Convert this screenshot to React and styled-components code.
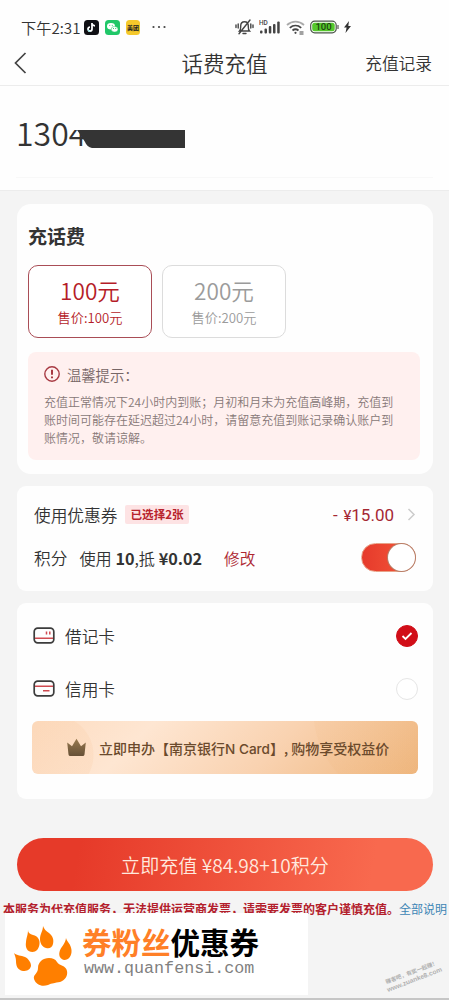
import React, { useState } from 'react';
import styled, { createGlobalStyle } from 'styled-components';

const GlobalStyle = createGlobalStyle`
  * {
    box-sizing: border-box;
  }
  body {
    margin: 0;
    background: #f4f4f4;
    font-family: "Noto Sans CJK SC", "Noto Sans", sans-serif;
    font-weight: 350;
    color: #333;
  }
  svg {
    display: block;
    flex-shrink: 0;
  }
`;

const Page = styled.div`
  display: flex;
  flex-direction: column;
  position: relative;
  width: 449px;
  height: 1000px;
  overflow: hidden;
  white-space: nowrap;
  background: #f4f4f4;
  border-bottom: 2px solid #c6c6c6;
`;

const StatusBar = styled.div`
  display: flex;
  align-items: center;
  height: 42px;
  padding: 12px 98px 0 21px;
  background: #fefefe;
`;

const Time = styled.span`
  width: 63px;
  font-size: 15.2px;
  line-height: 20px;
`;

const StatusIcons = styled.div`
  display: flex;
  align-items: center;
  gap: ${(p) => p.$gap}px;
  margin-left: ${(p) => (p.$end ? 'auto' : 0)};
`;

const NavBar = styled.div`
  display: grid;
  grid-template-columns: 1fr auto 1fr;
  align-items: center;
  height: 44px;
  padding: 0 17px 2px 14px;
  background: #fefefe;
  border-bottom: 1px solid #ececec;
`;

const Title = styled.div`
  padding-left: 3px;
  font-size: 21.5px;
  line-height: 41px;
`;

const NavLink = styled.div`
  justify-self: end;
  font-size: 16.7px;
`;

const PhoneSection = styled.div`
  display: flex;
  height: 105px;
  padding: 25px 16px 0;
  background: #fefefe;
  border-bottom: 1px solid #ececec;
`;

const PhoneField = styled.div`
  position: relative;
  flex: 1;
  height: 67px;
  border-bottom: 1px solid #f8f8f8;
  font-size: 32px;
  line-height: 43px;
`;

const Redaction = styled.svg`
  position: absolute;
  left: 53px;
  top: 8px;
`;

const Card = styled.section`
  display: flex;
  flex-direction: column;
  height: ${(p) => p.$height}px;
  margin: ${(p) => p.$top}px 16px 0 17px;
  padding: ${(p) => p.$pad};
  border-radius: ${(p) => p.$radius || 9}px;
  background: #fefefe;
`;

const CardTitle = styled.h2`
  margin: 0;
  font-size: 19px;
  line-height: 28px;
  font-weight: 700;
`;

const Options = styled.div`
  display: flex;
  gap: 10px;
  margin-top: 15px;
`;

const Option = styled.button`
  display: flex;
  flex-direction: column;
  align-items: center;
  width: 124px;
  height: 73px;
  padding: 10px 0 0;
  font-family: inherit;
  font-weight: inherit;
  color: ${(p) => (p.$active ? '#b51c28' : '#9b9b9b')};
  background: #fff;
  border: 1.5px solid ${(p) => (p.$active ? '#a94d56' : '#dcdcdc')};
  border-radius: 10px;
`;

const Amount = styled.span`
  font-size: 22.6px;
  line-height: 30px;
`;

const Price = styled.span`
  font-size: 13.2px;
  line-height: 24px;
`;

const Tips = styled.div`
  width: 392px;
  height: 108px;
  margin-top: 14px;
  padding: 11px 16px;
  border-radius: 8px;
  background: #fff0ef;
`;

const TipsTitle = styled.div`
  display: flex;
  align-items: center;
  gap: 7px;
  height: 22px;
  font-size: 14.3px;
  color: #766;
`;

const TipsText = styled.p`
  margin: 8px 0 0;
  font-size: 12px;
  line-height: 18px;
  color: #877877;
`;

const Row = styled.div`
  display: flex;
  align-items: center;
  height: ${(p) => p.$height}px;
  font-size: 16.7px;
`;

const Badge = styled.span`
  height: 19px;
  margin-left: 8px;
  padding: 0 5px;
  border-radius: 2px;
  background: #fde3e4;
  color: #b8232d;
  font-size: 11.6px;
  font-weight: 700;
  line-height: 18px;
`;

const Discount = styled.span`
  margin-left: auto;
  margin-right: 13px;
  color: #a52834;
  font-family: Roboto, sans-serif;
  font-weight: 400;
  font-size: 17px;
  word-spacing: 1.5px;
`;

const Yen = styled.span`
  font-size: 15px;
`;

const Points = styled.span`
  margin-left: 12px;
  font-size: 16.2px;
  b {
    font-weight: 700;
  }
`;

const Edit = styled.span`
  margin-left: 22px;
  font-size: 15.6px;
  color: #ad2732;
`;

const Switch = styled.button`
  display: flex;
  justify-content: ${(p) => (p.$on ? 'flex-end' : 'flex-start')};
  width: 55px;
  height: 29px;
  margin-left: auto;
  padding: 0;
  border: 1px solid #e8a288;
  border-radius: 15px;
  background: linear-gradient(90deg, #e63a2b, #f4593b);
`;

const Knob = styled.span`
  width: 27px;
  height: 27px;
  border-radius: 50%;
  background: #fff;
  box-shadow: 0 0 0 1px #b87f68;
`;

const PayLabel = styled.span`
  margin-left: 10px;
`;

const Radio = styled.span`
  display: flex;
  align-items: center;
  justify-content: center;
  width: 22px;
  height: 22px;
  margin-left: auto;
  border: 1px solid ${(p) => (p.$checked ? '#d10e18' : '#e6e6e6')};
  border-radius: 50%;
  background: ${(p) => (p.$checked ? '#d10e18' : '#fff')};
`;

const Banner = styled.div`
  display: flex;
  align-items: center;
  width: 386px;
  height: 53px;
  margin: 6px 0 0 -1px;
  padding-left: 34px;
  border-radius: 6px;
  color: #6b4a2c;
  font-size: 14px;
  font-weight: 500;
  background:
    radial-gradient(circle at 22px 34px, rgba(248, 200, 158, 0.2) 0 39px, transparent 40px),
    radial-gradient(circle at 374px -10px, rgba(232, 165, 95, 0.07) 0 92px, transparent 93px),
    linear-gradient(135deg, #fddcc0 0%, #fee6d2 28%, #f9d2b0 62%, #efb77f 100%);
`;

const BannerText = styled.span`
  margin-left: 12px;
`;

const Latin = styled.span`
  font-family: Inter, sans-serif;
  font-size: 13.6px;
`;

const PayButton = styled.button`
  flex-shrink: 0;
  height: 53px;
  margin: 39px 16px 0 17px;
  padding: 0;
  border: 0;
  border-radius: 27px;
  background: linear-gradient(100deg, #e63a29 15%, #f8694e 85%);
  color: #ffe9df;
  font-family: inherit;
  font-weight: inherit;
  font-size: 19.1px;
`;

const Notice = styled.div`
  margin-top: 9px;
  padding-left: 3px;
  font-size: 12px;
  line-height: 18px;
  font-weight: 700;
  color: #b3202c;
`;

const More = styled.span`
  font-weight: 400;
  color: #3d85b5;
`;

const SiteMark = styled.div`
  position: absolute;
  left: 5px;
  top: 913px;
  display: flex;
  width: 303px;
  height: 82px;
  padding: 12px 0 0 8px;
  background: #fff;
`;

const SiteText = styled.div`
  display: flex;
  flex-direction: column;
  margin: -1px 0 0 9px;
`;

const SiteName = styled.div`
  font-size: 29.5px;
  line-height: 35px;
  font-weight: 700;
  color: #000;
  span {
    color: #ff7f27;
  }
`;

const SiteUrl = styled.div`
  margin-left: 2px;
  font-family: "Liberation Mono", monospace;
  font-weight: 400;
  font-size: 16.7px;
  line-height: 20px;
  color: #808080;
`;

const CornerMark = styled.div`
  position: absolute;
  left: 382px;
  top: 968px;
  width: 62px;
  text-align: center;
  font-size: 5.5px;
  font-weight: 700;
  line-height: 8px;
  color: #b0b0b0;
  transform: rotate(-21deg);
`;

const CornerUrl = styled.div`
  font-family: "Liberation Sans", sans-serif;
  font-size: 6.6px;
`;

const payMethods = [
  { id: 'debit', label: '借记卡' },
  { id: 'credit', label: '信用卡' },
];

const TikTokIcon = () => (
  <svg width="15" height="15" viewBox="0 0 15 15">
    <rect width="15" height="15" rx="3.5" fill="#101014" />
    <path d="M8 3v6.1a2 2 0 1 1-2-2M8 3c.2 1.8 1.3 2.7 3 2.8" stroke="#fff" strokeWidth="1.8" fill="none" />
    <path d="M6.2 11.6a2.2 2.2 0 0 1-2.2-2" stroke="#39d8d8" strokeWidth=".6" fill="none" />
  </svg>
);

const WeChatIcon = () => (
  <svg width="15" height="15" viewBox="0 0 15 15">
    <rect width="15" height="15" rx="3.5" fill="#20c768" />
    <ellipse cx="6" cy="6.2" rx="4" ry="3.3" fill="#fff" />
    <ellipse cx="9.6" cy="9.2" rx="3.4" ry="2.8" fill="#fff" stroke="#20c768" strokeWidth=".5" />
    <path d="M4.7 5.4h.1M7.2 5.4h.1M8.5 8.5h.1M10.7 8.5h.1" stroke="#20c768" strokeWidth="1" strokeLinecap="round" />
  </svg>
);

const MeituanIcon = () => (
  <svg width="14" height="15" viewBox="0 0 14 15">
    <rect width="14" height="15" rx="3.5" fill="#f5c92b" />
    <text x="7" y="9.7" textAnchor="middle" fontSize="6" fontWeight="700" fill="#222">美团</text>
  </svg>
);

const MuteIcon = () => (
  <svg width="19" height="18" viewBox="0 0 19 18" fill="none" stroke="#444" strokeWidth="1.4" strokeLinecap="round">
    <path d="M4.5 13h10c-1.4-1.4-1.2-3-1.2-5 0-2.500-1.500-4.200-3.800-4.200S5.700 5.500 5.700 8c0 2 .2 3.600-1.200 5zM8 15.500h3M15 2 4 15.800" />
    <path d="M3.200 6v4M1 7v2.500M15.800 6v4M18 7v2.500" />
  </svg>
);

const SignalIcon = () => (
  <svg width="22" height="18" viewBox="0 0 22 18" fill="#444">
    <text x="0" y="6.500" fontSize="6.500" fontFamily="Roboto" fontWeight="500">HD</text>
    <rect x="1" y="12.500" width="2.500" height="3" rx="1" />
    <rect x="5.500" y="10.500" width="2.500" height="5" rx="1" />
    <rect x="9.800" y="8" width="2.500" height="7.500" rx="1" />
    <rect x="14" y="6" width="2.500" height="9.500" rx="1" />
    <rect x="18.200" y="3.500" width="2.500" height="12" rx="1" />
  </svg>
);

const WifiIcon = () => (
  <svg width="19" height="18" viewBox="0 0 19 18" fill="none" stroke="#444" strokeWidth="1.800">
    <path d="M1 7c5-4.600 12-4.600 17 0" stroke="#aaa" />
    <path d="M3.800 9.800c3.400-3 8-3 11.400 0M6.500 12.500c1.800-1.500 4.200-1.500 6 0" />
    <circle cx="9.500" cy="14.800" r="1.100" fill="#444" stroke="none" />
    <path d="M13.500 14h4M13.500 16h4" strokeWidth="1" />
  </svg>
);

const BatteryIcon = () => (
  <svg width="29" height="14" viewBox="0 0 29 14">
    <rect x=".7" y="1.200" width="25.500" height="11.600" rx="4" fill="#fff" stroke="#4b5548" strokeWidth="1.200" />
    <rect x="2.200" y="2.700" width="22.500" height="8.600" rx="2.500" fill="#55c82c" />
    <path d="M28 5v4" stroke="#555" strokeWidth="1.200" />
    <text x="13.500" y="10.300" textAnchor="middle" fontFamily="Roboto" fontSize="9.500" fontWeight="500" fill="#1d4510">100</text>
  </svg>
);

const CardIcon = ({ type }) => (
  <svg width="22" height="17" viewBox="0 0 22 17" fill="none">
    {type === 'debit' ? (
      <path d="M2 11.300h18M13.500 4.500v3M16.800 4.500v3" stroke="#cf4a50" strokeWidth="1.500" />
    ) : (
      <path d="M2 6.300h18M10 10.800h6.500" stroke="#cf4a50" strokeWidth="1.500" />
    )}
    <rect x="1.2" y="1.2" width="19.6" height="14.6" rx="3.500" stroke="#3c3c3c" strokeWidth="1.700" />
  </svg>
);

const CrownIcon = () => (
  <svg width="21" height="19" viewBox="0 0 21 19">
    <defs>
      <linearGradient id="crown" x1="0" y1="0" x2="0" y2="1">
        <stop offset="0" stopColor="#98794f" />
        <stop offset="1" stopColor="#665036" />
      </linearGradient>
    </defs>
    <path
      d="M1.200 4.500 6 8.200 10.500 .8 15 8.200l4.800-3.700-1.300 12q-.2 1.500-1.700 1.500H4.200q-1.500 0-1.700-1.500z"
      fill="url(#crown)"
    />
  </svg>
);

const PawIcon = () => (
  <svg width="60" height="64" viewBox="0 0 60 64" fill="#ff7f00">
    <path d="M15 5c0 3 2 4 5 5 5 1 7 5 6.500 9-.5 5-3.500 8-7 8-5 0-7.500-4-6.500-10 .5-5 2-7 2-12z" />
    <path d="M30 1c1 3 3 5 6 7 4 3 5 7 4 11-1 4-4 5-7 4-4-1-6-5-6-9 0-5 3-8 3-13z" />
    <path d="M53 13c1 4 5 6 5.500 12 .5 6-3 10-7 10-4-.5-6-4-5-8 1-5 6-8 6.500-14z" />
    <path d="M1 28c3 3 7 2 11 4 4 2 6 6 6 9-1 4-4 5-8 5-6-1-7-6-7-10 0-3-1-5-2-8z" />
    <path d="M36 33c4 0 6 1 8 4 2 4 9 3 10 9 1 5-2 9-7 11-5 1-8 1-12 3-6 2-12 0-14-6-1-5 4-5 4-11 0-6 5-10 11-10z" />
  </svg>
);

const App = () => {
  const [amount, setAmount] = useState(100);
  const [usePoints, setUsePoints] = useState(true);
  const [method, setMethod] = useState('debit');

  return (
    <Page>
      <GlobalStyle />
      <StatusBar>
        <Time>下午2:31</Time>
        <StatusIcons $gap={6}>
          <TikTokIcon />
          <WeChatIcon />
          <MeituanIcon />
          <svg width="22" height="4" viewBox="0 0 22 4" fill="#444">
            <circle cx="7.500" cy="2" r="1.100" />
            <circle cx="13" cy="2" r="1.100" />
            <circle cx="18.500" cy="2" r="1.100" />
          </svg>
        </StatusIcons>
        <StatusIcons $gap={5} $end>
          <MuteIcon />
          <SignalIcon />
          <WifiIcon />
          <BatteryIcon />
          <svg width="7" height="12" viewBox="0 0 7 12" fill="#333">
            <path d="M5 0 0 6.500h2.600L1.500 12 7 5H4.300z" />
          </svg>
        </StatusIcons>
      </StatusBar>
      <NavBar>
        <svg width="13" height="22" viewBox="0 0 13 22" fill="none" stroke="#444" strokeWidth="1.700">
          <path d="M11.500 1 1.500 11l10 10" />
        </svg>
        <Title>话费充值</Title>
        <NavLink>充值记录</NavLink>
      </NavBar>
      <PhoneSection>
        <PhoneField>
          1304
          <Redaction width="118" height="32" viewBox="0 0 118 32">
            <path d="M1 0h117v11H1z" fill="#fefefe" />
            <path d="M8 11h108v18H23q-5-1-7-6l-3-5z" fill="#343434" />
          </Redaction>
        </PhoneField>
      </PhoneSection>

      <Card $height={270} $top={13} $pad="18px 11px 0" $radius={14}>
        <CardTitle>充话费</CardTitle>
        <Options>
          {[100, 200].map((value) => (
            <Option key={value} $active={amount === value} onClick={() => setAmount(value)}>
              <Amount>{value}元</Amount>
              <Price>售价:{value}元</Price>
            </Option>
          ))}
        </Options>
        <Tips>
          <TipsTitle>
            <svg width="16" height="16" viewBox="0 0 16 16" fill="none" stroke="#a83a43">
              <circle cx="8" cy="8" r="7.200" strokeWidth="1.400" />
              <path d="M8 3.800v5M8 10.400v1.800" strokeWidth="2" />
            </svg>
            温馨提示：
          </TipsTitle>
          <TipsText>
            充值正常情况下24小时内到账；月初和月末为充值高峰期，充值到
            <br />
            账时间可能存在延迟超过24小时，请留意充值到账记录确认账户到
            <br />
            账情况，敬请谅解。
          </TipsText>
        </Tips>
      </Card>

      <Card $height={105} $top={12} $pad="7px 17px 0 17px">
        <Row $height={43}>
          使用优惠券
          <Badge>已选择2张</Badge>
          <Discount>
            - <Yen>¥</Yen>15.00
          </Discount>
          <svg width="9" height="13" viewBox="0 0 9 13" fill="none" stroke="#ccc" strokeWidth="1.500">
            <path d="m1.500 1 5.500 5.500L1.500 12" />
          </svg>
        </Row>
        <Row $height={43}>
          积分
          <Points>
            使用 <b>10</b>,抵 <b>¥0.02</b>
          </Points>
          <Edit>修改</Edit>
          <Switch $on={usePoints} onClick={() => setUsePoints(!usePoints)}>
            <Knob />
          </Switch>
        </Row>
      </Card>

      <Card $height={196} $top={12} $pad="6px 15px 0 16px">
        {payMethods.map((item) => (
          <Row key={item.id} $height={53} onClick={() => setMethod(item.id)}>
            <CardIcon type={item.id} />
            <PayLabel>{item.label}</PayLabel>
            <Radio $checked={method === item.id}>
              {method === item.id && (
                <svg width="12" height="10" viewBox="0 0 12 10" fill="none" stroke="#fff" strokeWidth="1.800">
                  <path d="m1.500 5 3 3 6-6" />
                </svg>
              )}
            </Radio>
          </Row>
        ))}
        <Banner>
          <CrownIcon />
          <BannerText>
            立即申办【南京银行<Latin>N Card</Latin>】, 购物享受权益价
          </BannerText>
        </Banner>
      </Card>

      <PayButton>立即充值 ¥84.98+10积分</PayButton>
      <Notice>
        本服务为代充值服务，无法提供运营商发票，请需要发票的客户谨慎充值。
        <More>全部说明</More>
      </Notice>

      <SiteMark>
        <PawIcon />
        <SiteText>
          <SiteName>
            <span>券粉丝</span>优惠券
          </SiteName>
          <SiteUrl>www.quanfensi.com</SiteUrl>
        </SiteText>
      </SiteMark>
      <CornerMark>
        赚客吧，有奖一起赚！
        <CornerUrl>www.zuanke8.com</CornerUrl>
      </CornerMark>
    </Page>
  );
};

export default App;
